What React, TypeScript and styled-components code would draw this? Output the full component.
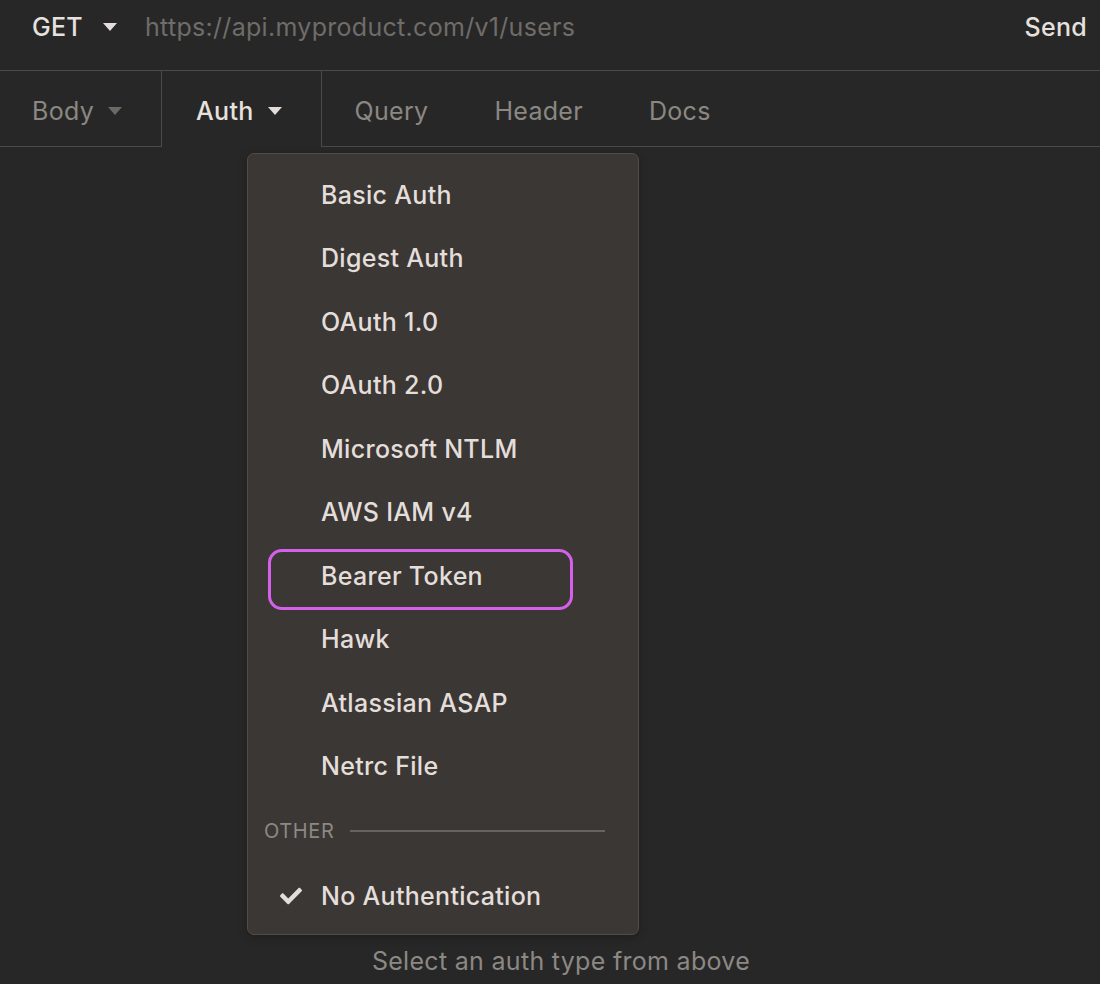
import React from "react";
import styled, { createGlobalStyle } from "styled-components";
import { FaCheck } from "react-icons/fa";

const GlobalStyle = createGlobalStyle`
  html, body {
    margin: 0;
    padding: 0;
    background: #272727;
  }
  body {
    font-family: Inter, "Noto Sans", "Liberation Sans", sans-serif;
    -webkit-font-smoothing: antialiased;
    letter-spacing: 0.3px;
  }
  #root {
    width: 1100px;
    height: 984px;
    overflow: hidden;
  }
`;

const Page = styled.div`
  position: relative;
  width: 1100px;
  height: 984px;
  background: #272727;
  color: #e3dedb;
`;

const TopBar = styled.div`
  height: 71px;
  box-sizing: border-box;
  padding: 0 13px 17px 32px;
  display: flex;
  align-items: center;
  border-bottom: 1px solid #4a4a4a;
`;

const Method = styled.div`
  display: flex;
  align-items: center;
  gap: 20px;
  font-size: 25px;
  font-weight: 500;
  color: #e6e1de;
  width: 113px;
`;

const Caret = styled.span<{ $muted?: boolean }>`
  display: inline-block;
  width: 0;
  height: 0;
  border-left: 7.5px solid transparent;
  border-right: 7.5px solid transparent;
  border-top: 8px solid ${(p) => (p.$muted ? "#6c6966" : "#e2ddda")};
`;

const Url = styled.div`
  flex: 1;
  font-size: 25px;
  color: #6f6c69;
`;

const Send = styled.div`
  font-size: 25px;
  font-weight: 500;
  color: #e6e1de;
`;

const TabBar = styled.div`
  height: 76px;
  display: flex;
`;

const Tab = styled.div<{ $active?: boolean; $first?: boolean }>`
  box-sizing: border-box;
  display: flex;
  align-items: center;
  gap: 14px;
  padding: ${(p) =>
    p.$first ? "4px 39px 0 32px" : p.$active ? "4px 39px 0 34px" : "4px 33px 0"};
  font-size: 25px;
  font-weight: ${(p) => (p.$active ? 500 : 400)};
  color: ${(p) => (p.$active ? "#e6e1de" : "#8b8783")};
  border-bottom: ${(p) => (p.$active ? "none" : "1px solid #4a4a4a")};
  border-left: ${(p) => (p.$active ? "1px solid #4a4a4a" : "none")};
  border-right: ${(p) => (p.$active ? "1px solid #4a4a4a" : "none")};
`;

const TabFill = styled.div`
  flex: 1;
  border-bottom: 1px solid #4a4a4a;
`;

const Body = styled.div`
  height: 837px;
  box-sizing: border-box;
  padding: 799px 0 0 22px;
  text-align: center;
  font-size: 25px;
  color: #8c8884;
`;

const Menu = styled.div`
  position: absolute;
  left: 247px;
  top: 153px;
  width: 392px;
  height: 782px;
  box-sizing: border-box;
  padding: 9px 0 0;
  background: #3b3734;
  border: 1px solid #514c49;
  border-radius: 7px;
  box-shadow: 0 2px 8px rgba(0, 0, 0, 0.25);
`;

const MenuItem = styled.div`
  position: relative;
  height: 63.5px;
  display: grid;
  grid-template-columns: 41px auto;
  align-items: center;
  padding-left: 32px;
  font-size: 25px;
  font-weight: 500;
  color: #e4dedb;
`;

const CheckSlot = styled.span`
  display: flex;
  align-items: center;
  color: #e4dedb;
  font-size: 22px;
`;

const Highlight = styled.span`
  position: absolute;
  left: 20px;
  top: 5px;
  width: 305px;
  height: 61px;
  box-sizing: border-box;
  border: 3px solid #d660ea;
  border-radius: 14px;
  pointer-events: none;
`;

const SectionHeader = styled.div`
  height: 66px;
  display: flex;
  align-items: center;
  gap: 16px;
  padding: 0 33px 0 16px;
`;

const SectionLabel = styled.span`
  font-size: 20px;
  letter-spacing: 0.6px;
  color: #8d8884;
`;

const SectionRule = styled.span`
  flex: 1;
  height: 2px;
  background: #67625e;
`;

const authTypes = [
  "Basic Auth",
  "Digest Auth",
  "OAuth 1.0",
  "OAuth 2.0",
  "Microsoft NTLM",
  "AWS IAM v4",
  "Bearer Token",
  "Hawk",
  "Atlassian ASAP",
  "Netrc File",
];

export default function App() {
  return (
    <Page>
      <GlobalStyle />
      <TopBar>
        <Method>
          GET <Caret />
        </Method>
        <Url>https://api.myproduct.com/v1/users</Url>
        <Send>Send</Send>
      </TopBar>
      <TabBar>
        <Tab $first>
          Body <Caret $muted />
        </Tab>
        <Tab $active>
          Auth <Caret />
        </Tab>
        <Tab>Query</Tab>
        <Tab>Header</Tab>
        <Tab>Docs</Tab>
        <TabFill />
      </TabBar>
      <Body>Select an auth type from above</Body>
      <Menu>
        {authTypes.map((t) => (
          <MenuItem key={t}>
            {t === "Bearer Token" && <Highlight />}
            <CheckSlot />
            <span>{t}</span>
          </MenuItem>
        ))}
        <SectionHeader>
          <SectionLabel>OTHER</SectionLabel>
          <SectionRule />
        </SectionHeader>
        <MenuItem>
          <CheckSlot>
            <FaCheck />
          </CheckSlot>
          <span>No Authentication</span>
        </MenuItem>
      </Menu>
    </Page>
  );
}
